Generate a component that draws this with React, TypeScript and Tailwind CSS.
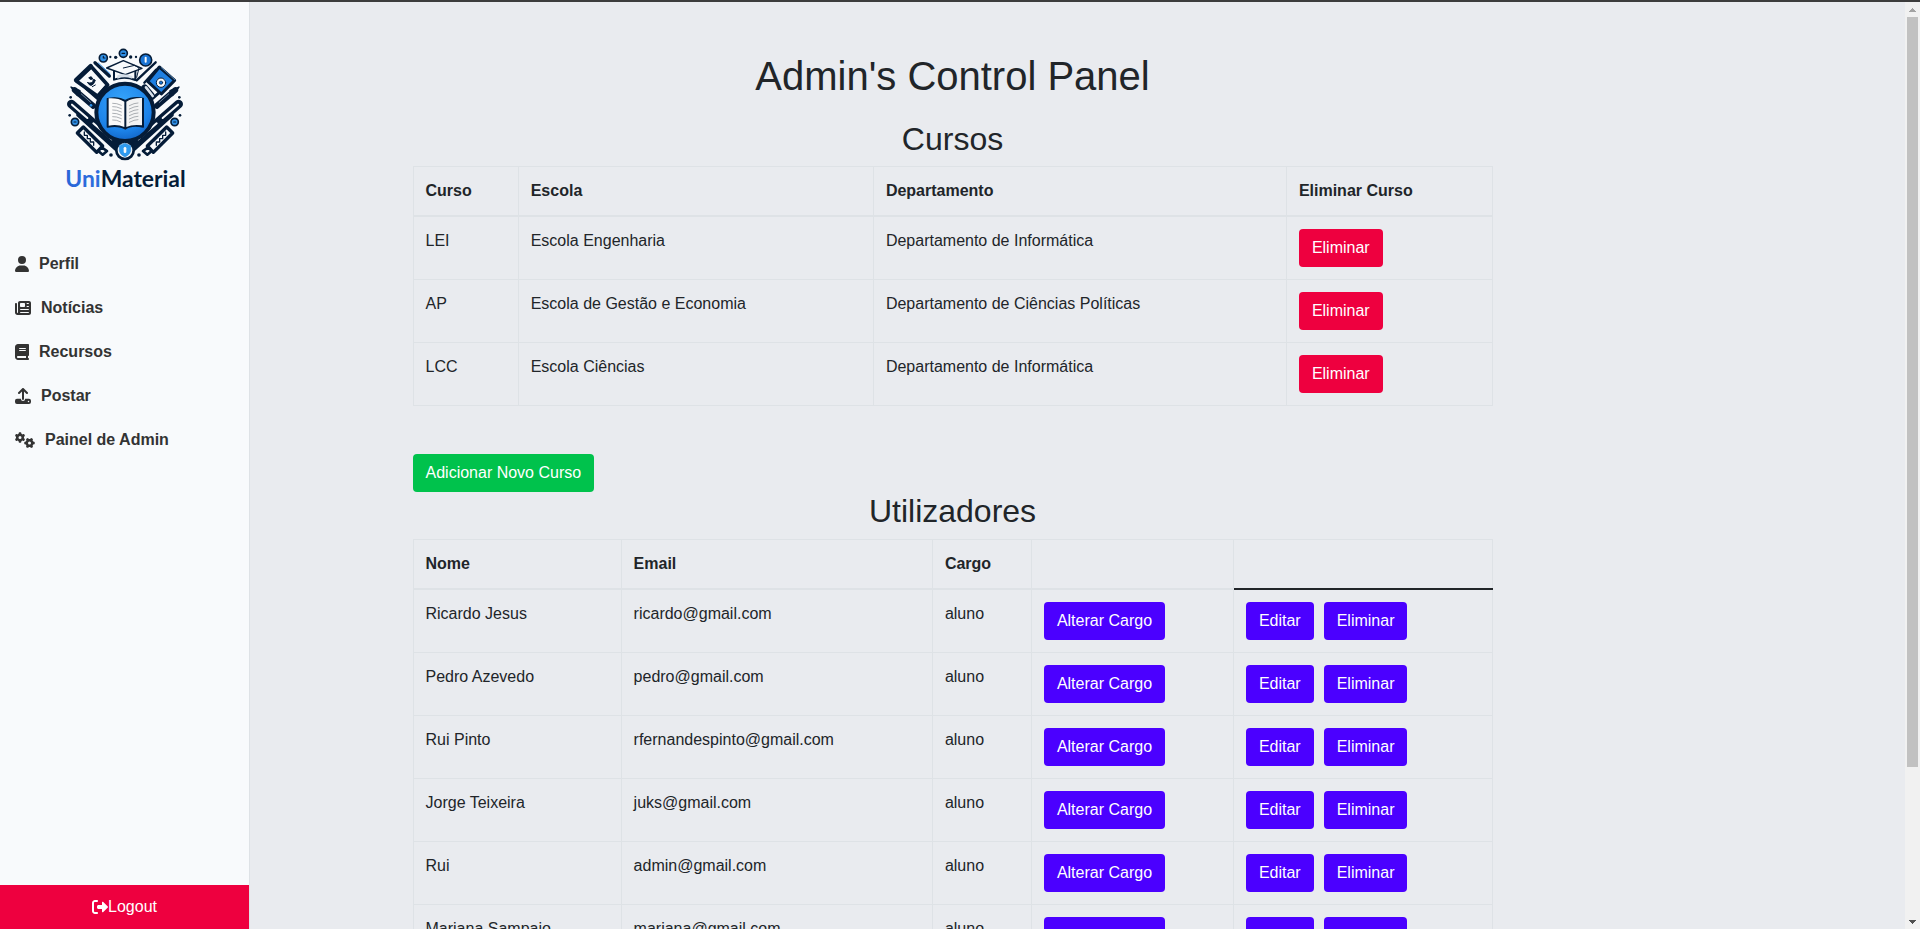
import React from "react";
import { FaUser, FaNewspaper, FaBook, FaGears } from "react-icons/fa6";

const navy = "#051c38";

function Logo() {
  return (
    <svg viewBox="0 0 450 495" className="block h-[165px] w-[150px]" fill="none" strokeLinejoin="round" strokeLinecap="round">
      <defs>
        <radialGradient id="disc" cx="0.45" cy="0.3" r="0.8">
          <stop offset="0" stopColor="#36a4fa" />
          <stop offset="0.65" stopColor="#1c82e8" />
          <stop offset="1" stopColor="#0d57b8" />
        </radialGradient>
        <linearGradient id="word" x1="0" x2="1">
          <stop offset="0" stopColor="#2a66d8" />
          <stop offset="1" stopColor="#3583ec" />
        </linearGradient>
      </defs>

      {/* crossed pens and brushes behind the disc */}
      <g stroke={navy}>
        <path d="M64 207 L205 330" strokeWidth="26" />
        <path d="M386 207 L245 330" strokeWidth="26" />
        <path d="M66 209 L112 249 M130 265 L185 313" stroke="#f8fafc" strokeWidth="6" />
        <path d="M384 209 L338 249 M320 265 L265 313" stroke="#f8fafc" strokeWidth="6" />
        <path d="M84 240 L200 345" strokeWidth="11" />
        <path d="M366 240 L250 345" strokeWidth="11" />
        <path d="M74 165 L130 213" strokeWidth="17" />
        <path d="M376 165 L320 213" strokeWidth="17" />
        <path d="M63 156 L82 182 L90 167 Z M387 156 L368 182 L360 167 Z" fill={navy} strokeWidth="4" />
        <path d="M94 177 L122 202 M356 177 L328 202" stroke="#6c8098" strokeWidth="3" />
        <path d="M108 160 L144 192 M342 160 L306 192" strokeWidth="9" />
      </g>

      {/* rulers */}
      <g stroke={navy} strokeWidth="10" fill="#f8fafc">
        <path d="M100 276 L82 294 L140 352 L158 333 Z" />
        <path d="M350 276 L368 294 L310 352 L292 333 Z" />
        <path d="M155 337 L145 348 L158 359 L171 348 Z M295 337 L305 348 L292 359 L279 348 Z" strokeWidth="8" />
        <path d="M103 291 v10 h9 v10 h9 v10 h10 v10 M347 291 v10 h-9 v10 h-9 v10 h-10 v10" strokeWidth="4" />
        <path d="M112 290 l26 27 M338 290 l-26 27" strokeWidth="5" />
      </g>

      {/* left notebook */}
      <path d="M124 95 L173 150 L143 184 L79 138 Z" fill="#f8fafc" stroke={navy} strokeWidth="11" />
      <path d="M122 93 L78 135" stroke={navy} strokeWidth="13" />
      <path d="M148 176 L168 154" stroke={navy} strokeWidth="7" />
      <path d="M117 128 q8 -7 11 4 q-8 5 -11 -4 M113 143 q12 20 23 -7 q-3 -3 -6 -3 q-1 15 -17 10 M127 155 l9 -5" fill={navy} stroke={navy} strokeWidth="3" />
      <path d="M135 83 L178 123" stroke={navy} strokeWidth="10" />
      <path d="M145 84 L180 116" stroke="#3791e6" strokeWidth="3" />

      {/* right notebook */}
      <path d="M328 96 L374 136 L334 177 L293 139 Z" fill="#1f80e2" stroke={navy} strokeWidth="9" />
      <path d="M334 98 L374 134" stroke="#6eaee9" strokeWidth="2" />
      <path d="M318 104 L283 143" stroke={navy} strokeWidth="7" />
      <circle cx="333" cy="143" r="14" fill="#f8fafc" stroke={navy} strokeWidth="3" />
      <circle cx="333" cy="143" r="5" fill="#1876d8" stroke={navy} strokeWidth="2" />
      <path d="M284 158 L304 181" stroke={navy} strokeWidth="20" />
      <path d="M288 157 L308 183" stroke="#d9e1ea" strokeWidth="8" />
      <path d="M317 82 L260 136" stroke={navy} strokeWidth="7" />

      {/* graduation cap */}
      <path d="M192 106 V134 Q224 122 256 135 V106" fill="#f8fafc" stroke={navy} strokeWidth="6" />
      <path d="M170 99 L220 77 L276 100 L226 119 Z" fill="#f8fafc" stroke={navy} strokeWidth="4.500" />
      <path d="M220 99 L254 91 L267 99 L260 127" stroke={navy} strokeWidth="3" />
      <path d="M202 121 Q223 114 247 123 V131 Q223 123 202 131 Z" fill="#d6dfe9" />

      {/* central disc with open book */}
      <circle cx="225" cy="232" r="86" fill="url(#disc)" stroke={navy} strokeWidth="12" />
      <path d="M172 191 Q205 184 226 197 Q246 184 280 190 V276 Q244 268 226 282 Q208 270 172 276 Z" fill={navy} stroke={navy} strokeWidth="4" />
      <path d="M176 190 Q204 188 223 200 V276 Q202 267 176 272 Z" fill="#fafafa" />
      <path d="M276 189 Q247 188 229 200 V276 Q248 267 276 271 Z" fill="#f3f3f3" />
      <path
        d="M188 205 l12 1 l14 5 M188 215 l12 1 l14 5 M188 225 l12 1 l14 5 M188 235 l12 1 l14 5 M188 245 l12 1 l14 5 M188 255 l12 1 l12 5 M264 204 l-12 2 l-14 6 M264 214 l-12 2 l-14 6 M264 224 l-12 2 l-14 6 M264 234 l-12 2 l-14 6 M264 244 l-12 2 l-14 6 M264 254 l-12 2 l-14 6"
        stroke="#8f9499"
        strokeWidth="2.200"
      />

      {/* shield badge */}
      <circle cx="225" cy="346" r="26" fill="#f8fafc" stroke={navy} strokeWidth="8" />
      <path d="M225 325 L242 332 V347 Q240 359 225 366 Q210 359 208 347 V332 Z" fill="#2f9bf0" stroke="#3d8fd6" strokeWidth="2" />
      <path d="M225 340 v10" stroke="#f8fafc" strokeWidth="8" />

      {/* satellite badges */}
      <g fill="#2f8fe6" stroke={navy} strokeWidth="5">
        <circle cx="160" cy="69" r="12" />
        <circle cx="220" cy="55" r="12" />
        <circle cx="287" cy="75" r="18" fill="#1a74d4" />
        <circle cx="75" cy="261" r="11" />
        <circle cx="374" cy="261" r="11" />
      </g>
      <path d="M160 64 v5 h5 M216 55 h8 M72 261 h6 M371 261 h6" stroke={navy} strokeWidth="3.500" />
      <path d="M287 68 v12" stroke="#f8fafc" strokeWidth="6" />
      <circle cx="123" cy="211" r="4" fill="#2b90e8" />
      <g fill={navy}>
        <circle cx="181" cy="66" r="3.500" />
        <circle cx="197" cy="67" r="5" />
        <circle cx="242" cy="66" r="5" />
        <circle cx="258" cy="66" r="3.500" />
        <circle cx="62" cy="187" r="4" />
        <circle cx="388" cy="187" r="4" />
        <circle cx="59" cy="241" r="4" />
        <circle cx="390" cy="241" r="4" />
        <circle cx="183" cy="360" r="5.500" />
        <circle cx="267" cy="360" r="5.500" />
      </g>

      <text x="46" y="456" fontFamily="Lato, sans-serif" fontWeight="700" fontSize="69" textLength="361" lengthAdjust="spacingAndGlyphs" fill={navy}>
        <tspan fill="url(#word)">Uni</tspan>Material
      </text>
    </svg>
  );
}

function UploadIcon() {
  return (
    <svg viewBox="0 0 512 512" className="h-4 w-4" fill="currentColor">
      <path d="M288 109.300V352a32 32 0 0 1-64 0V109.300l-73.400 73.400a32 32 0 0 1-45.300-45.300l128-128a32 32 0 0 1 45.300 0l128 128a32 32 0 0 1-45.300 45.300z" />
      <path
        fillRule="evenodd"
        d="M64 344H190V352a66 66 0 0 0 132 0V344H448a64 64 0 0 1 64 64v40a64 64 0 0 1-64 64H64a64 64 0 0 1-64-64v-40a64 64 0 0 1 64-64zM432 456a24 24 0 1 0 0-48 24 24 0 1 0 0 48z"
      />
    </svg>
  );
}

function LogoutIcon() {
  return (
    <svg viewBox="0 0 512 512" className="h-4 w-4" fill="currentColor">
      <path d="M505 273c9.400-9.400 9.400-24.600 0-33.900L361 95c-6.900-6.900-17.200-8.900-26.200-5.200S320 102.300 320 112l0 80-112 0c-26.500 0-48 21.500-48 48l0 32c0 26.500 21.500 48 48 48l112 0 0 80c0 9.700 5.800 18.500 14.800 22.200s19.300 1.700 26.200-5.200L505 273z" />
      <path d="M160 96c17.700 0 32-14.300 32-32s-14.300-32-32-32L96 32C43 32 0 75 0 128L0 384c0 53 43 96 96 96l64 0c17.700 0 32-14.300 32-32s-14.300-32-32-32l-64 0c-17.700 0-32-14.300-32-32l0-256c0-17.700 14.300-32 32-32l64 0z" />
    </svg>
  );
}

const navItems = [
  { label: "Perfil", icon: <FaUser className="h-4 w-[14px]" /> },
  { label: "Notícias", icon: <FaNewspaper className="h-4 w-4" /> },
  { label: "Recursos", icon: <FaBook className="h-4 w-[14px]" /> },
  { label: "Postar", icon: <UploadIcon /> },
  { label: "Painel de Admin", icon: <FaGears className="h-4 w-5" /> },
];

const courses = [
  ["LEI", "Escola Engenharia", "Departamento de Informática"],
  ["AP", "Escola de Gestão e Economia", "Departamento de Ciências Políticas"],
  ["LCC", "Escola Ciências", "Departamento de Informática"],
];

const users = [
  ["Ricardo Jesus", "ricardo@gmail.com", "aluno"],
  ["Pedro Azevedo", "pedro@gmail.com", "aluno"],
  ["Rui Pinto", "rfernandespinto@gmail.com", "aluno"],
  ["Jorge Teixeira", "juks@gmail.com", "aluno"],
  ["Rui", "admin@gmail.com", "aluno"],
  ["Mariana Sampaio", "mariana@gmail.com", "aluno"],
];

const tones = {
  red: "bg-[#ee003f]",
  green: "bg-[#00c24c]",
  purple: "bg-[#4b00ff]",
};

function Button({ tone, children }: { tone: keyof typeof tones; children: React.ReactNode }) {
  return (
    <button className={`inline-block h-[38px] rounded border border-transparent px-3 align-middle leading-6 text-white ${tones[tone]}`}>
      {children}
    </button>
  );
}

function Th({ children, dark }: { children?: React.ReactNode; dark?: boolean }) {
  return (
    <th
      className={`h-[49px] border border-b-2 border-[#dee2e6] p-3 text-left align-bottom font-bold ${dark ? "border-b-[#212529]" : ""}`}
    >
      {children}
    </th>
  );
}

function Td({ children }: { children?: React.ReactNode }) {
  return <td className="border border-[#dee2e6] p-3 align-top">{children}</td>;
}

export default function App() {
  return (
    <div className="flex h-[929px] w-[1920px] flex-col overflow-hidden bg-[#e9ebef] font-['Liberation_Sans',Arial,sans-serif] text-base leading-6 text-[#212529]">
      <div className="h-[2px] shrink-0 bg-[#3c3c3c]" />
      <div className="flex min-h-0 flex-1">
        <aside className="flex w-[250px] shrink-0 flex-col border-r border-[#dee2e6] bg-[#f8fafc]">
          <div className="h-[240px] pt-[33px] pl-[50px]">
            <Logo />
          </div>
          <nav className="flex-1">
            {navItems.map((item) => (
              <a key={item.label} className="flex h-11 items-center gap-[10px] pl-[15px] font-bold text-[#333333]">
                {item.icon}
                <span>{item.label}</span>
              </a>
            ))}
          </nav>
          <button className="flex h-11 items-center justify-center bg-[#ee003f] text-white">
            <LogoutIcon />
            <span>Logout</span>
          </button>
        </aside>

        <main className="min-w-0 flex-1 overflow-hidden pt-[50px] pl-[162.5px]">
          <div className="w-[1080px]">
            <h1 className="mb-5 text-center text-[40px] leading-[48px]">Admin's Control Panel</h1>
            <h2 className="mb-2 text-center text-[32px] leading-[38.4px]">Cursos</h2>
            <table className="w-full table-fixed border-collapse border border-[#dee2e6]">
              <colgroup>
                <col className="w-[105.2px]" />
                <col className="w-[355.2px]" />
                <col className="w-[413px]" />
                <col />
              </colgroup>
              <thead>
                <tr>
                  <Th>Curso</Th>
                  <Th>Escola</Th>
                  <Th>Departamento</Th>
                  <Th>Eliminar Curso</Th>
                </tr>
              </thead>
              <tbody>
                {courses.map((row) => (
                  <tr key={row[0]}>
                    {row.map((cell, i) => (
                      <Td key={i}>{cell}</Td>
                    ))}
                    <Td>
                      <Button tone="red">Eliminar</Button>
                    </Td>
                  </tr>
                ))}
              </tbody>
            </table>

            <div className="mt-12 flex">
              <Button tone="green">Adicionar Novo Curso</Button>
            </div>

            <h2 className="mb-2 text-center text-[32px] leading-[38.4px]">Utilizadores</h2>
            <table className="w-full table-fixed border-collapse border border-[#dee2e6]">
              <colgroup>
                <col className="w-[208.1px]" />
                <col className="w-[311.3px]" />
                <col className="w-[99px]" />
                <col className="w-[202px]" />
                <col />
              </colgroup>
              <thead>
                <tr>
                  <Th>Nome</Th>
                  <Th>Email</Th>
                  <Th>Cargo</Th>
                  <Th />
                  <Th dark />
                </tr>
              </thead>
              <tbody>
                {users.map((row) => (
                  <tr key={row[1]}>
                    {row.map((cell, i) => (
                      <Td key={i}>{cell}</Td>
                    ))}
                    <Td>
                      <Button tone="purple">Alterar Cargo</Button>
                    </Td>
                    <Td>
                      <div className="flex gap-[10px]">
                        <Button tone="purple">Editar</Button>
                        <Button tone="purple">Eliminar</Button>
                      </div>
                    </Td>
                  </tr>
                ))}
              </tbody>
            </table>
          </div>
        </main>

        <div className="flex w-[15px] shrink-0 flex-col items-center bg-[#f1f1f1]">
          <div className="flex h-[15px] shrink-0 items-center">
            <svg viewBox="0 0 7 4" className="h-1 w-[7px]" fill="#a3a3a3" shapeRendering="crispEdges">
              <path d="M3 0h1v1h1v1h1v1h1v1H0V3h1V2h1V1h1z" />
            </svg>
          </div>
          <div className="h-[750px] w-[11px] bg-[#c1c1c1]" />
          <div className="flex-1" />
          <div className="flex h-[15px] shrink-0 items-center">
            <svg viewBox="0 0 7 4" className="h-1 w-[7px]" fill="#505050" shapeRendering="crispEdges">
              <path d="M0 0h7v1H6v1H5v1H4v1H3V3H2V2H1V1H0z" />
            </svg>
          </div>
        </div>
      </div>
    </div>
  );
}
